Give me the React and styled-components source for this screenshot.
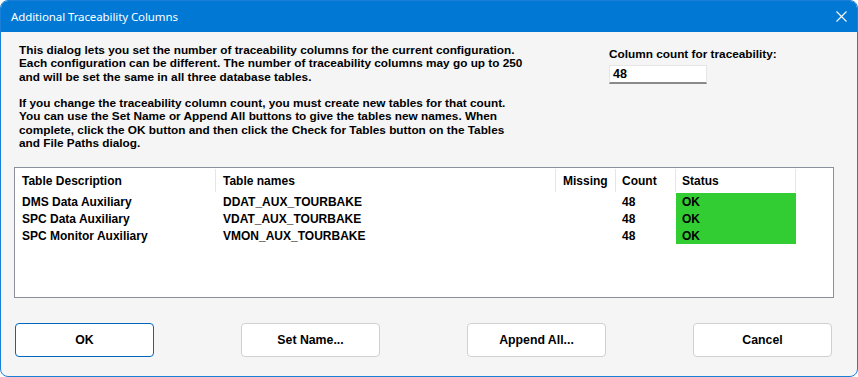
import React from "react";
import styled, { createGlobalStyle } from "styled-components";

const GlobalStyle = createGlobalStyle`
  html, body {
    margin: 0;
    padding: 0;
    background: #ffffff;
  }
  * {
    box-sizing: border-box;
  }
`;

const Window = styled.div`
  width: 858px;
  height: 377px;
  border: 1px solid #1a7fd6;
  border-radius: 8px;
  overflow: hidden;
  background: #f5f5f5;
  display: flex;
  flex-direction: column;
  font-family: "Liberation Sans", Arial, sans-serif;
  font-weight: bold;
  font-size: 11.8px;
  color: #000;
`;

const TitleBar = styled.div`
  height: 31px;
  flex: 0 0 31px;
  background: #0078d4;
  color: #fff;
  display: flex;
  align-items: center;
  justify-content: space-between;
  padding: 0 10px 0 10px;
`;

const Title = styled.span`
  font-family: "Noto Sans", "Open Sans", sans-serif;
  font-weight: normal;
  font-size: 11.5px;
  letter-spacing: -0.1px;
`;

const CloseButton = styled.span`
  display: flex;
  align-items: center;
  justify-content: center;
  width: 12px;
  height: 12px;
`;

const Body = styled.div`
  flex: 1;
  display: flex;
  flex-direction: column;
  padding: 12px 0 0 13px;
`;

const TopRow = styled.div`
  display: flex;
  align-items: flex-start;
`;

const Description = styled.div`
  flex: 0 0 595px;
  padding-left: 5px;
  line-height: 13.3px;
  white-space: nowrap;
`;

const Paragraph = styled.p`
  margin: 0 0 13.3px 0;
  &:last-child {
    margin-bottom: 0;
  }
`;

const CountField = styled.label`
  display: flex;
  flex-direction: column;
  gap: 4px;
  padding-top: 3px;
`;

const CountInput = styled.div`
  width: 98px;
  height: 19px;
  background: #fff;
  border: 1px solid #e6e6e6;
  border-bottom: 2px solid #8a8a8a;
  display: flex;
  align-items: center;
  padding-left: 3px;
  font-size: 12.5px;
`;

const TablePanel = styled.div`
  margin-top: 17px;
  width: 820px;
  height: 131px;
  background: #fff;
  border: 1px solid #8b8f9b;
  font-size: 12px;
`;

const Grid = styled.div`
  display: grid;
  grid-template-columns: 201px 340px 60px 60px 120px 1fr;
  grid-auto-rows: 17px;
  grid-template-rows: 25px;
`;

const HeaderCell = styled.div`
  display: flex;
  align-items: center;
  padding-left: ${(p) => p.$pad || 7}px;
  position: relative;
  white-space: nowrap;
  &::after {
    content: "";
    display: ${(p) => (p.$last ? "none" : "block")};
    position: absolute;
    right: 0;
    top: 1px;
    bottom: 1px;
    width: 1px;
    background: #e6e6e6;
  }
`;

const Cell = styled.div`
  display: flex;
  align-items: center;
  padding-left: ${(p) => p.$pad || 7}px;
  background: ${(p) => (p.$ok ? "#32cd32" : "transparent")};
  white-space: nowrap;
`;

const ButtonRow = styled.div`
  margin-top: 25px;
  display: flex;
  gap: 87px;
  padding-left: 1px;
`;

const Button = styled.button`
  width: 139px;
  height: 34px;
  border-radius: 4px;
  background: #fff;
  border: 1px solid ${(p) => (p.$primary ? "#0067c0" : "#d0d0d0")};
  font-family: "Liberation Sans", Arial, sans-serif;
  font-weight: bold;
  font-size: 12.3px;
  color: #000;
  padding: 0;
`;

const rows = [
  ["DMS Data Auxiliary", "DDAT_AUX_TOURBAKE", "", "48", "OK"],
  ["SPC Data Auxiliary", "VDAT_AUX_TOURBAKE", "", "48", "OK"],
  ["SPC Monitor Auxiliary", "VMON_AUX_TOURBAKE", "", "48", "OK"],
];

const headers = [
  { label: "Table Description", pad: 7 },
  { label: "Table names", pad: 7 },
  { label: "Missing", pad: 7 },
  { label: "Count", pad: 6 },
  { label: "Status", pad: 6 },
];

export default function App() {
  return (
    <>
      <GlobalStyle />
      <Window>
        <TitleBar>
          <Title>Additional Traceability Columns</Title>
          <CloseButton>
            <svg width="11" height="11" viewBox="0 0 11 11">
              <path d="M0.5 0.5 L10.5 10.5 M10.5 0.5 L0.5 10.5" stroke="#fff" strokeWidth="1.1" />
            </svg>
          </CloseButton>
        </TitleBar>
        <Body>
          <TopRow>
            <Description>
              <Paragraph>
                This dialog lets you set the number of traceability columns for the current configuration.
                <br />
                Each configuration can be different. The number of traceability columns may go up to 250
                <br />
                and will be set the same in all three database tables.
              </Paragraph>
              <Paragraph>
                If you change the traceability column count, you must create new tables for that count.
                <br />
                You can use the Set Name or Append All buttons to give the tables new names. When
                <br />
                complete, click the OK button and then click the Check for Tables button on the Tables
                <br />
                and File Paths dialog.
              </Paragraph>
            </Description>
            <CountField>
              Column count for traceability:
              <CountInput>48</CountInput>
            </CountField>
          </TopRow>
          <TablePanel>
            <Grid>
              {headers.map((h) => (
                <HeaderCell key={h.label} $pad={h.pad}>
                  {h.label}
                </HeaderCell>
              ))}
              <HeaderCell $last />
              {rows.map((r) => (
                <React.Fragment key={r[1]}>
                  <Cell>{r[0]}</Cell>
                  <Cell>{r[1]}</Cell>
                  <Cell>{r[2]}</Cell>
                  <Cell $pad={6}>{r[3]}</Cell>
                  <Cell $pad={6} $ok>
                    {r[4]}
                  </Cell>
                  <Cell />
                </React.Fragment>
              ))}
            </Grid>
          </TablePanel>
          <ButtonRow>
            <Button $primary>OK</Button>
            <Button>Set Name...</Button>
            <Button>Append All...</Button>
            <Button>Cancel</Button>
          </ButtonRow>
        </Body>
      </Window>
    </>
  );
}
